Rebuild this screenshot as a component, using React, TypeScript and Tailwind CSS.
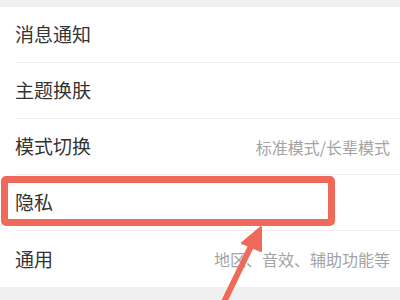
const ROWS: { label: string; hint?: string }[] = [
  { label: "消息通知" },
  { label: "主题换肤" },
  { label: "模式切换", hint: "标准模式/长辈模式" },
  { label: "隐私" },
  { label: "通用", hint: "地区、音效、辅助功能等" },
];

export default function App() {
  return (
    <div
      className="relative h-[300px] w-[400px] overflow-hidden bg-[#f0f0f0]"
      style={{ fontFamily: '"Noto Sans CJK SC", "Noto Sans", sans-serif' }}
    >
      <div className="h-[7px]" />
      <div className="bg-white">
        {ROWS.map((r, i) => (
          <div key={r.label} className="pl-[15px]">
            <div
              className={`flex h-[56px] items-center justify-between pr-[10px] ${
                i < ROWS.length - 1 ? "border-b border-[#ebebeb]" : ""
              }`}
            >
              <span className="whitespace-nowrap text-[19px] text-[#333333]">{r.label}</span>
              {r.hint && <span className="whitespace-nowrap text-[16px] text-[#a3a3a3]">{r.hint}</span>}
            </div>
          </div>
        ))}
      </div>

      {/* highlight box */}
      <div className="absolute left-[1px] top-[176px] h-[50px] w-[334px] rounded-[5px] border-[7px] border-[#ef6a5a]" />

      {/* arrow */}
      <svg className="absolute left-0 top-0" width="400" height="300" viewBox="0 0 400 300">
        <line x1="223" y1="304" x2="254" y2="240" stroke="#ef6a5a" strokeWidth="6" strokeLinecap="round" />
        <polygon points="261,227 242,243 261,251" fill="#ef6a5a" strokeLinejoin="round" stroke="#ef6a5a" strokeWidth="2" />
      </svg>
    </div>
  );
}
